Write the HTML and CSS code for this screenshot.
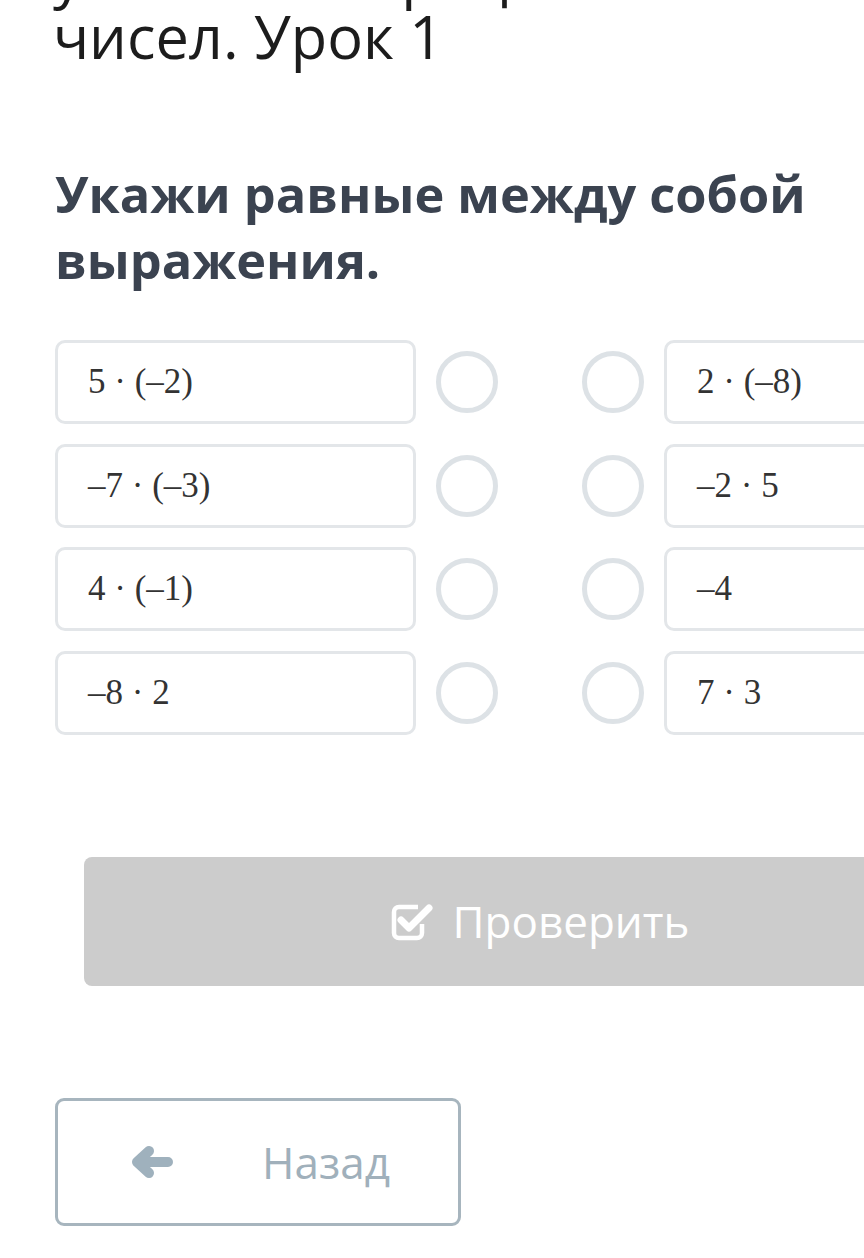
FILE: index.html
```html
<!DOCTYPE html>
<html lang="ru">

<head>
    <meta charset="UTF-8">
    <meta name="viewport" content="width=device-width, initial-scale=1.0">
    <title>Урок 1</title>
    <link rel="stylesheet" href="styles.css">
</head>

<body>
    <div class="page">
        <h1 class="lesson-title">умножение рациональных<br>чисел. Урок 1</h1>

        <h2 class="question">Укажи равные между собой выражения.</h2>

        <!-- пары для сопоставления -->
        <div class="match">
            <div class="expr">5 · (–2)</div>
            <span class="dot"></span>
            <span></span>
            <span class="dot"></span>
            <div class="expr">2 · (–8)</div>

            <div class="expr">–7 · (–3)</div>
            <span class="dot"></span>
            <span></span>
            <span class="dot"></span>
            <div class="expr">–2 · 5</div>

            <div class="expr">4 · (–1)</div>
            <span class="dot"></span>
            <span></span>
            <span class="dot"></span>
            <div class="expr">–4</div>

            <div class="expr">–8 · 2</div>
            <span class="dot"></span>
            <span></span>
            <span class="dot"></span>
            <div class="expr">7 · 3</div>
        </div>

        <button class="check-btn" disabled>
            <svg width="44" height="40" viewBox="0 0 44 40">
                <path d="M31 23 v9 a5 5 0 0 1 -5 5 h-18 a5 5 0 0 1 -5 -5 v-21 a5 5 0 0 1 5 -5 h19" fill="none" stroke="#fff" stroke-width="4.5" />
                <path d="M10 19 l8 8 l20 -20" fill="none" stroke="#fff" stroke-width="7" stroke-linecap="round" stroke-linejoin="round" />
            </svg>
            Проверить
        </button>

        <button class="back-btn">
            <svg width="44" height="36" viewBox="0 0 44 36">
                <path d="M38 18 H9 M19 7 L7 18 L19 29" fill="none" stroke="#9fb1bd" stroke-width="10" stroke-linecap="round" stroke-linejoin="round" />
            </svg>
            <span>Назад</span>
        </button>
    </div>
</body>

</html>
```

FILE: styles.css
```css
/* styles.css */
html,
body {
    margin: 0;
    overflow: hidden;
    background-color: #fff;
}

.page {
    width: 970px;
    margin-left: 55px;
    font-family: "Open Sans", "Noto Sans", sans-serif;
}

.lesson-title {
    margin: -57px 0 0 -2px;
    font-size: 59.5px;
    font-weight: 400;
    line-height: 62px;
    color: #1c1c1c;
}

.question {
    margin: 94px 0 0;
    font-size: 50.5px;
    font-weight: 700;
    line-height: 66px;
    color: #3b4350;
    width: 780px;
}

.match {
    margin-top: 47px;
    display: grid;
    grid-template-columns: 361px 62px 1fr 62px 361px;
    grid-auto-rows: 84px;
    column-gap: 20px;
    row-gap: 19.5px;
    align-items: center;
}

.expr {
    height: 100%;
    box-sizing: border-box;
    border: 3px solid #e3e6e9;
    border-radius: 10px;
    padding-left: 30px;
    display: flex;
    align-items: center;
    font-family: "Liberation Serif", serif;
    font-size: 35px;
    color: #333;
}

.dot {
    width: 62px;
    height: 62px;
    box-sizing: border-box;
    border: 5px solid #dde2e6;
    border-radius: 50%;
}

button {
    font-family: inherit;
    box-sizing: border-box;
    display: flex;
    align-items: center;
}

.check-btn {
    margin: 122px 29px 0;
    width: 912px;
    height: 129px;
    background-color: #cccccc;
    color: #fff;
    border: none;
    border-radius: 8px;
    justify-content: center;
    gap: 18px;
    font-size: 44px;
}

.back-btn {
    margin-top: 112px;
    width: 406px;
    height: 128px;
    background-color: #fff;
    border: 3px solid #a7b5be;
    border-radius: 9px;
    padding: 0 68px 0 72px;
    justify-content: space-between;
    font-size: 44px;
    color: #a0b0bb;
}
```
